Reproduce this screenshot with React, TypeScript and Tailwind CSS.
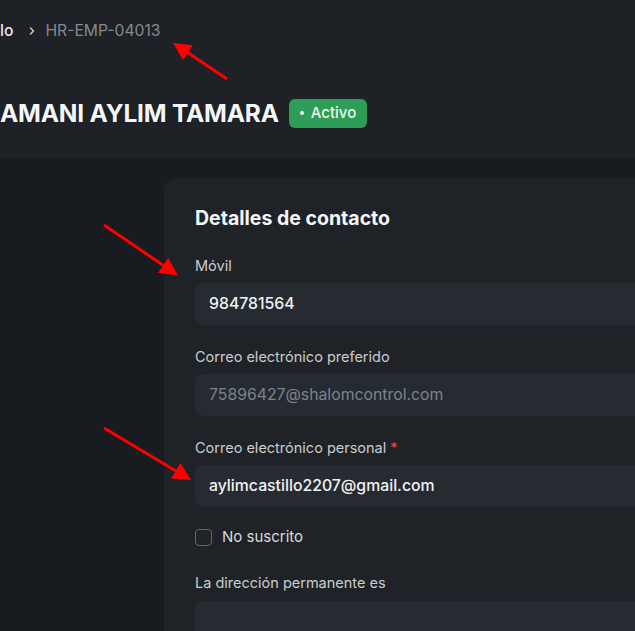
import React from "react";

function Field({ label, value, muted, required }: { label: string; value: string; muted?: boolean; required?: boolean }) {
  return (
    <div className="flex flex-col">
      <div className="h-[20px] text-[14.5px] leading-[20px] text-[#c9ccd1]">
        {label}
        {required && <span className="text-[#e5484d]"> *</span>}
      </div>
      <div className="mt-[7px] h-[42px] rounded-[8px] bg-[#262a31] pl-[14px] flex items-center">
        <span className={muted ? "text-[15.8px] text-[#7c838b]" : "text-[15.8px] font-medium text-[#f1f2f4]"}>{value}</span>
      </div>
    </div>
  );
}

export default function App() {
  return (
    <div className="relative w-[635px] h-[631px] overflow-hidden bg-[#181b1f]" style={{ fontFamily: "Inter, 'Noto Sans', sans-serif" }}>
      <div className="h-[158px] bg-[#1e2125] flex flex-col">
        <div className="mt-[20px] h-[22px] flex items-center text-[15.7px] leading-[22px]">
          <span className="text-[#e6e7e9] font-medium">lo</span>
          <span className="ml-[14px] text-[#c7c9cc]">
            <svg width="10" height="10" viewBox="0 0 10 10" fill="none" stroke="currentColor" strokeWidth="1.5" strokeLinecap="round" strokeLinejoin="round"><path d="M3.5 2 L6.5 5 L3.5 8" /></svg>
          </span>
          <span className="ml-[8px] text-[#858a91]">HR-EMP-04013</span>
        </div>
        <div className="mt-[57px] flex items-center h-[28px]">
          <span className="text-[24.5px] font-bold text-[#f4f5f6] tracking-[-0.2px]">AMANI AYLIM TAMARA</span>
          <span className="ml-[10px] h-[29px] px-[11px] rounded-[6px] bg-[#2e9d58] flex items-center gap-[7px] text-[15px] font-medium text-[#e9f7ee]">
            <span className="w-[4px] h-[4px] rounded-full bg-[#e9f7ee]"></span>
            Activo
          </span>
        </div>
      </div>
      <div className="flex pt-[20px]">
        <div className="w-[164px] shrink-0"></div>
        <div className="flex-1 min-w-[520px] rounded-tl-[12px] bg-[#1f2226] pl-[31px] pt-[27px] pb-[40px]">
          <div className="text-[19.5px] font-bold text-[#f4f5f6] leading-[26px]">Detalles de contacto</div>
          <div className="mt-[25px] flex flex-col gap-[22px]">
            <Field label="Móvil" value="984781564" />
            <Field label="Correo electrónico preferido" value="75896427@shalomcontrol.com" muted />
            <Field label="Correo electrónico personal" value="aylimcastillo2207@gmail.com" required />
          </div>
          <div className="mt-[21px] flex items-center h-[18px]">
            <span className="w-[17px] h-[17px] rounded-[4px] border border-[#62676e] bg-[#1f2226]"></span>
            <span className="ml-[10px] text-[15px] text-[#d8dadd]">No suscrito</span>
          </div>
          <div className="mt-[27px] h-[20px] text-[14.5px] leading-[20px] text-[#c9ccd1]">La dirección permanente es</div>
          <div className="mt-[8px] h-[80px] rounded-[8px] bg-[#262a31]"></div>
        </div>
      </div>
      <svg className="absolute inset-0 pointer-events-none" width="635" height="631">
        <defs>
          <marker id="ah" markerWidth="6" markerHeight="6" refX="4" refY="3" orient="auto">
            <path d="M0 0 L6 3 L0 6 Z" fill="#ff0000" />
          </marker>
        </defs>
        <line x1="227" y1="79" x2="178" y2="46" stroke="#ff0000" strokeWidth="3" markerEnd="url(#ah)" />
        <line x1="104" y1="225" x2="173" y2="272" stroke="#ff0000" strokeWidth="3" markerEnd="url(#ah)" />
        <line x1="104" y1="428" x2="186" y2="477" stroke="#ff0000" strokeWidth="3" markerEnd="url(#ah)" />
      </svg>
    </div>
  );
}
